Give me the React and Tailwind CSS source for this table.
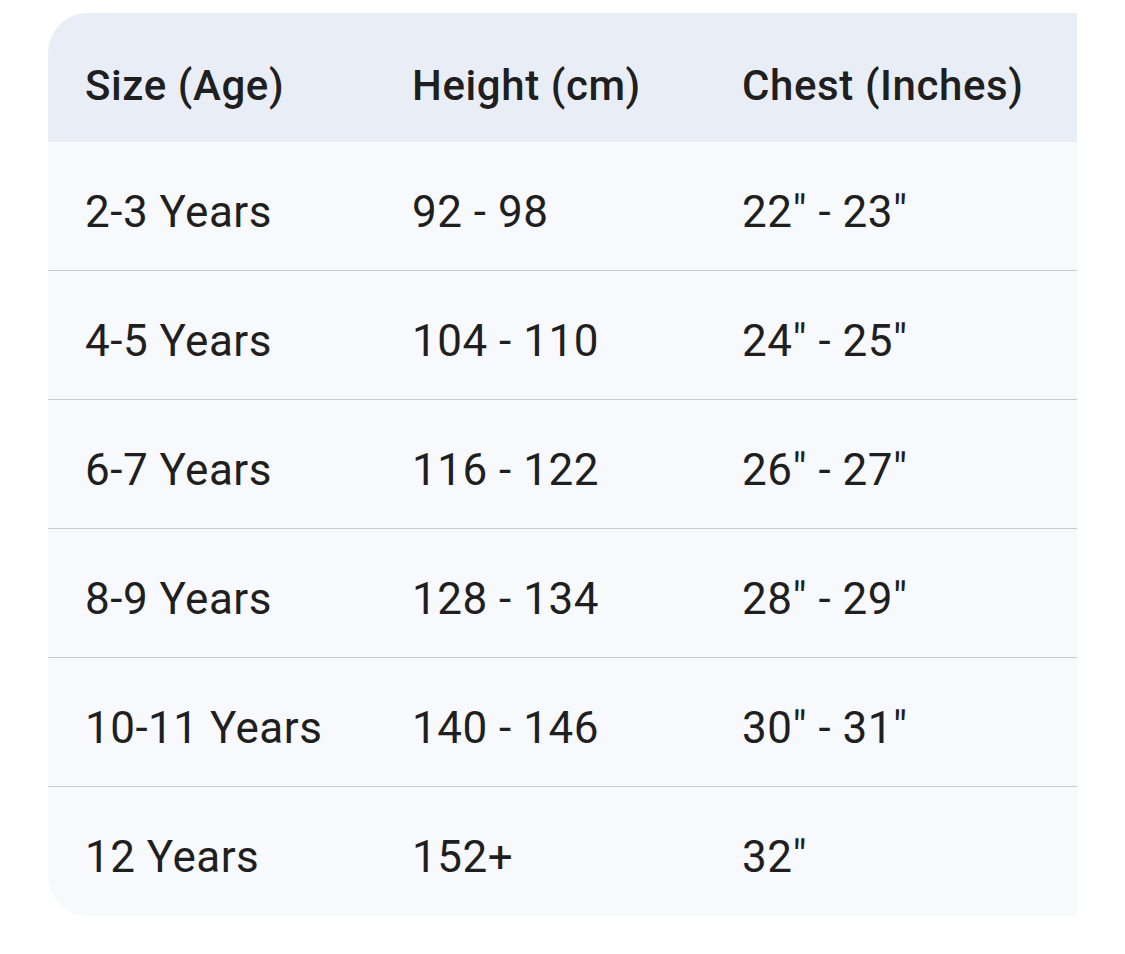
export default function App() {
  const rows = [
    ["2-3 Years", "92 - 98", '22" - 23"'],
    ["4-5 Years", "104 - 110", '24" - 25"'],
    ["6-7 Years", "116 - 122", '26" - 27"'],
    ["8-9 Years", "128 - 134", '28" - 29"'],
    ["10-11 Years", "140 - 146", '30" - 31"'],
    ["12 Years", "152+", '32"'],
  ];
  return (
    <div className="w-[1125px] h-[954px] bg-white pt-[13px] pl-[48px]">
      <div className="w-[1029px] rounded-l-[40px] overflow-hidden bg-[#f8f9fc] text-[#1f1f1f]">
        <div className="flex h-[129px] bg-[#e9eef6] font-['Roboto',sans-serif] font-medium text-[42px] leading-[52px] tracking-[0.6px]">
          <div className="w-[327px] pl-[37px] pt-[47px]">Size (Age)</div>
          <div className="w-[330px] pl-[37px] pt-[47px]">Height (cm)</div>
          <div className="flex-1 pl-[37px] pt-[47px]">Chest (Inches)</div>
        </div>
        {rows.map((r, i) => (
          <div
            key={i}
            className={
              "flex h-[129px] font-['Roboto',sans-serif] text-[44px] leading-[52px] tracking-[0.5px] " +
              (i < rows.length - 1 ? "border-b border-[#c9cacd]" : "")
            }
          >
            <div className="w-[327px] pl-[37px] pt-[44px]">{r[0]}</div>
            <div className="w-[330px] pl-[37px] pt-[44px]">{r[1]}</div>
            <div className="flex-1 pl-[37px] pt-[44px]">{r[2]}</div>
          </div>
        ))}
      </div>
    </div>
  );
}
